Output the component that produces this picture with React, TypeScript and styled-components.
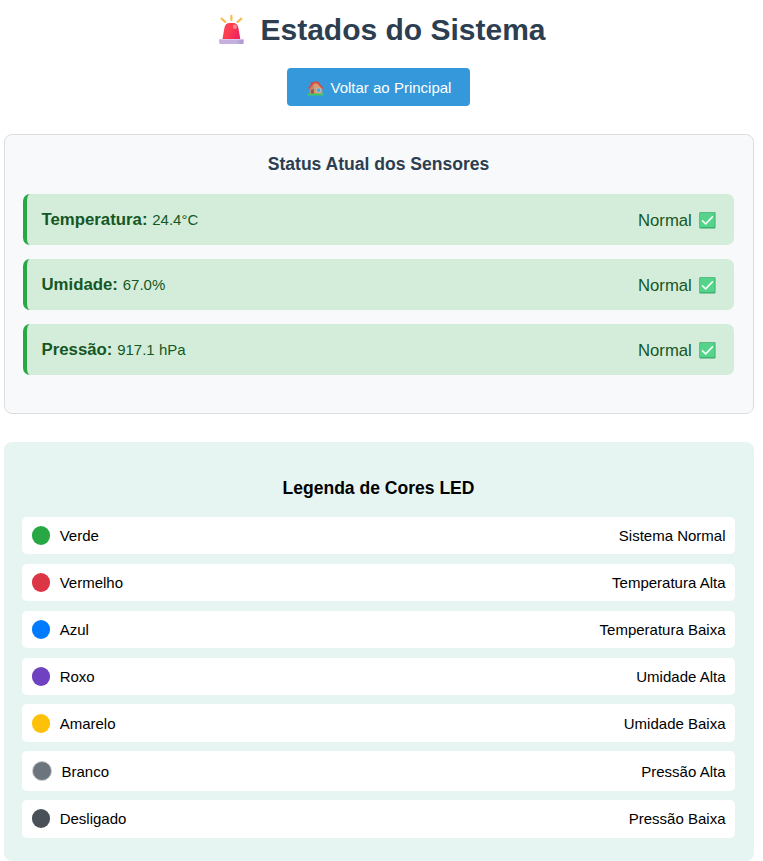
import React from 'react';
import styled, { createGlobalStyle } from 'styled-components';

const GlobalStyle = createGlobalStyle`
  *, *::before, *::after { box-sizing: border-box; }
  body {
    margin: 0;
    background: #fff;
    color: #000;
    font-family: 'Liberation Sans', Arial, sans-serif;
    font-size: 15px;
    overflow: hidden;
  }
`;

const Page = styled.main`
  width: 750px;
  height: 861px;
  margin-left: 4px;
  overflow: hidden;
  display: flex;
  flex-direction: column;
  align-items: stretch;
`;

const Header = styled.header`
  height: 134px;
  flex: none;
  display: flex;
  flex-direction: column;
  align-items: center;
`;

const Title = styled.h1`
  margin: 12px 0 0;
  padding-left: 7px;
  height: 35px;
  display: flex;
  align-items: center;
  gap: 15px;
  color: #2c3e50;
  font-size: 30px;
  line-height: 35px;
  white-space: nowrap;
`;

const BackLink = styled.a`
  margin: 21px 1px 0 0;
  width: 183px;
  height: 38px;
  padding: 1px 0 0 20px;
  display: flex;
  align-items: center;
  gap: 6.5px;
  border-radius: 4px;
  background: #3498db;
  color: #fff;
  text-decoration: none;
  white-space: nowrap;
`;

const StatusPanel = styled.section`
  height: 280px;
  flex: none;
  padding: 19px 19px 18px 18px;
  border: 1px solid #ddd;
  border-radius: 8px;
  background: #f8f9fa;
`;

const PanelTitle = styled.h3<{ $color?: string }>`
  margin: 0;
  height: 21px;
  color: ${(p) => p.$color ?? '#000'};
  font-size: 17.55px;
  line-height: 21px;
  text-align: center;
`;

const SensorList = styled.div`
  margin-top: 19px;
  display: grid;
  gap: 14px;
`;

const SensorRow = styled.div`
  height: 51px;
  padding: 0 18px 0 14.5px;
  display: flex;
  align-items: center;
  justify-content: space-between;
  border-left: 4px solid #28a745;
  border-radius: 7px;
  background: #d4edda;
  color: #155724;
`;

const SensorReading = styled.span`
  line-height: 20px;
  strong {
    margin-right: 0.6px;
    font-size: 16.8px;
  }
`;

const SensorState = styled.span`
  padding-top: 1px;
  display: flex;
  align-items: center;
  gap: 7.2px;
  font-size: 16.7px;
  line-height: 21px;
`;

const LegendPanel = styled.section`
  height: 419px;
  margin-top: 28px;
  flex: none;
  padding: 36px 19px 0 18px;
  border-radius: 8px;
  background: #e6f5f1;
`;

const LegendList = styled.div`
  margin-top: 17.95px;
  display: flex;
  flex-direction: column;
  gap: 9.375px;
`;

const LegendRow = styled.div<{ $height: number }>`
  height: ${(p) => p.$height}px;
  flex: none;
  padding: 0 9.5px;
  display: flex;
  align-items: center;
  justify-content: space-between;
  border-radius: 5px;
  background: #fff;
  line-height: 17px;
`;

const LegendName = styled.span`
  display: flex;
  align-items: center;
  gap: 9.4px;
`;

const Dot = styled.i<{ $color: string; $outlined?: boolean }>`
  width: ${(p) => (p.$outlined ? 20.6 : 18.75)}px;
  height: ${(p) => (p.$outlined ? 20.6 : 18.75)}px;
  border: ${(p) => (p.$outlined ? '1px solid #ccc' : 'none')};
  border-radius: 50%;
  background: ${(p) => p.$color};
`;

const Siren = () => (
  <svg width="26" height="31" viewBox="0 0 26 31" aria-hidden="true">
    <defs>
      <linearGradient id="dome" x1="0" y1="0" x2="1" y2="0.5">
        <stop offset="0" stopColor="#f5495f" />
        <stop offset="0.5" stopColor="#ff3d4e" />
        <stop offset="1" stopColor="#ed245e" />
      </linearGradient>
      <linearGradient id="base" x1="0" y1="0" x2="1" y2="0">
        <stop offset="0" stopColor="#c8addf" />
        <stop offset="0.7" stopColor="#c1b2dc" />
        <stop offset="1" stopColor="#a995ce" />
      </linearGradient>
    </defs>
    <path d="M2.6 4.6 6.4 8M12.4 1.8V6M22.3 4.6 18.5 8" stroke="#f5bd43" strokeWidth="2.1" strokeLinecap="round" />
    <path d="M3.4 25.5 5.4 14Q6.4 9 10.4 9h4Q18.4 9 19.4 14L21.4 25.5Z" fill="url(#dome)" />
    <ellipse cx="15.9" cy="12.8" rx="2" ry="2.2" fill="#ff9698" opacity=".85" />
    <rect x=".2" y="25" width="24.4" height="5" rx="1.2" fill="url(#base)" />
    <path d="M1.4 25.5h22" stroke="#d9c7ee" />
  </svg>
);

const House = () => (
  <svg width="17" height="16" viewBox="0 0 17 16" aria-hidden="true">
    <path d="M3.7 2h2.2v5H3.7Z" fill="#a35e53" />
    <path d="M2.6 8.5 6.8 3l4 5v6.7H2.6Z" fill="#c48a6d" />
    <path d="M7 3h4.2l4.1 5.3v6.4H7Z" fill="#d79a73" />
    <path d="M6.6 1.4H11l5.4 6.8-1.3.9L10.3 3.4H7.1L2.3 8.9 1 7.9Z" fill="#dc4a42" />
    <path d="M4.1 9.4h2.8v5.3H4.1Z" fill="#92594c" />
    <path d="M9.6 8.2h4V12h-4Z" fill="#37a9ee" stroke="#e6cdbd" strokeWidth=".5" />
    <path d="M1.4 14.5h14.7" stroke="#45c764" strokeWidth="1.8" strokeLinecap="round" />
  </svg>
);

const CheckBox = () => (
  <svg width="17" height="17" viewBox="0 0 17 17" aria-hidden="true">
    <rect x=".3" y=".2" width="16.2" height="16.2" rx=".8" fill="#35a968" />
    <rect x="1" y="1" width="14.7" height="14.3" rx=".5" fill="#55d38a" />
    <path d="m3.5 8.9 3.2 3 6.7-7" fill="none" stroke="#f3fff6" strokeWidth="1.6" strokeLinecap="round" strokeLinejoin="round" />
  </svg>
);

const sensors = [
  { label: 'Temperatura:', value: '24.4°C' },
  { label: 'Umidade:', value: '67.0%' },
  { label: 'Pressão:', value: '917.1 hPa' },
];

const legend = [
  { name: 'Verde', color: '#28a745', meaning: 'Sistema Normal' },
  { name: 'Vermelho', color: '#dc3545', meaning: 'Temperatura Alta' },
  { name: 'Azul', color: '#007bff', meaning: 'Temperatura Baixa' },
  { name: 'Roxo', color: '#6f42c1', meaning: 'Umidade Alta' },
  { name: 'Amarelo', color: '#ffc107', meaning: 'Umidade Baixa' },
  { name: 'Branco', color: '#6c757d', meaning: 'Pressão Alta', outlined: true },
  { name: 'Desligado', color: '#495057', meaning: 'Pressão Baixa' },
];

export default function App() {
  return (
    <>
      <GlobalStyle />
      <Page>
        <Header>
          <Title><Siren />Estados do Sistema</Title>
          <BackLink href="#"><House />Voltar ao Principal</BackLink>
        </Header>
        <StatusPanel>
          <PanelTitle $color="#2c3e50">Status Atual dos Sensores</PanelTitle>
          <SensorList>
            {sensors.map((s) => (
              <SensorRow key={s.label}>
                <SensorReading><strong>{s.label}</strong> {s.value}</SensorReading>
                <SensorState>Normal<CheckBox /></SensorState>
              </SensorRow>
            ))}
          </SensorList>
        </StatusPanel>
        <LegendPanel>
          <PanelTitle>Legenda de Cores LED</PanelTitle>
          <LegendList>
            {legend.map((l) => (
              <LegendRow key={l.name} $height={l.outlined ? 39.4 : 37.5}>
                <LegendName><Dot $color={l.color} $outlined={l.outlined} />{l.name}</LegendName>
                <span>{l.meaning}</span>
              </LegendRow>
            ))}
          </LegendList>
        </LegendPanel>
      </Page>
    </>
  );
}
